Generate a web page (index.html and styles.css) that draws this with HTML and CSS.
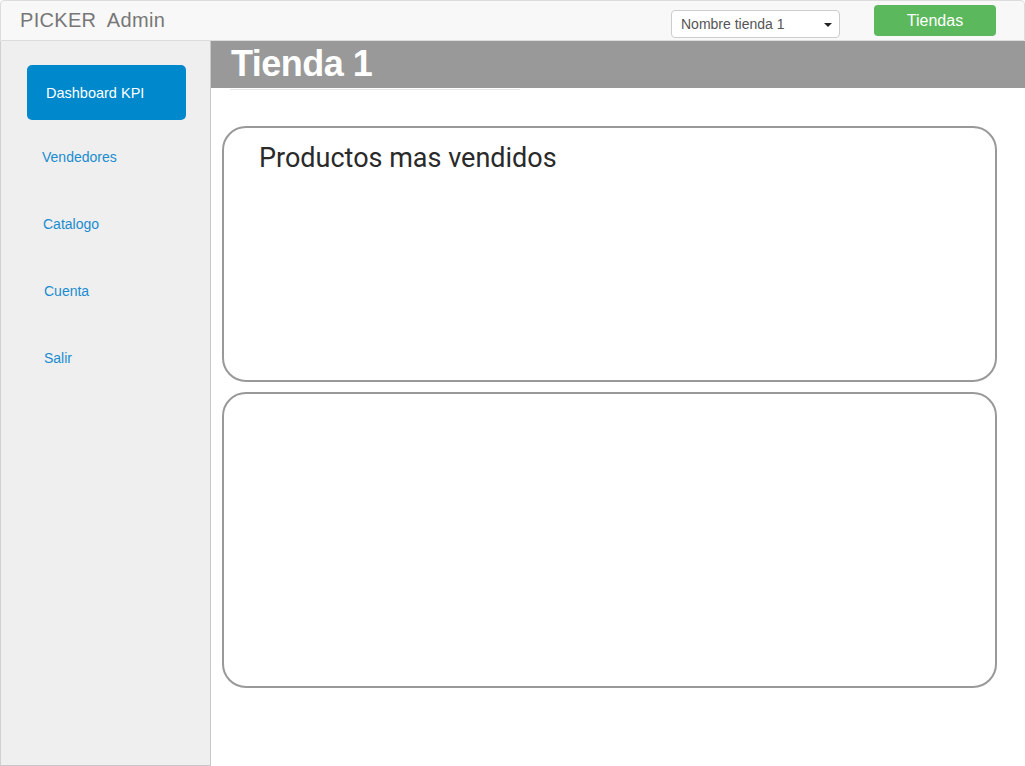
FILE: index.html
```html
<!DOCTYPE html>
<html lang="es">
<head>
<meta charset="utf-8">
<title>PICKER Admin</title>
<link rel="stylesheet" href="styles.css">
</head>
<body>
<header class="navbar">
  <div class="brand">PICKER&nbsp; Admin</div>
  <div class="nav-right">
    <div class="select">
      <span>Nombre tienda 1</span>
      <span class="caret"></span>
    </div>
    <button class="btn-green">Tiendas</button>
  </div>
</header>
<div class="layout">
  <aside class="sidebar">
    <a class="nav-active">Dashboard KPI</a>
    <nav class="nav-links">
      <a class="l1">Vendedores</a>
      <a class="l2">Catalogo</a>
      <a class="l3">Cuenta</a>
      <a class="l3">Salir</a>
    </nav>
  </aside>
  <main class="main">
    <div class="title-band"><h1>Tienda 1</h1></div>
    <div class="title-rule"></div>
    <section class="card card-top">
      <h2>Productos mas vendidos</h2>
    </section>
    <section class="card card-bottom"></section>
  </main>
</div>
</body>
</html>
```

FILE: styles.css
```css
* { box-sizing: border-box; }
html, body { margin: 0; padding: 0; }
body {
  width: 1025px;
  height: 766px;
  overflow: hidden;
  background: #fff;
  font-family: "Liberation Sans", Arial, sans-serif;
}
.navbar {
  height: 41px;
  background: #f8f8f8;
  border: 1px solid #dcdcdc;
  border-radius: 4px 4px 0 0;
  display: flex;
  align-items: flex-start;
  justify-content: space-between;
}
.brand {
  font-size: 20px;
  letter-spacing: 0.3px;
  color: #777;
  padding: 8px 0 0 19px;
  line-height: 23px;
}
.nav-right {
  display: flex;
  align-items: flex-start;
}
.select {
  margin-top: 9px;
  width: 169px;
  height: 28px;
  border: 1px solid #ccc;
  border-radius: 4px;
  background: #fff;
  display: flex;
  align-items: center;
  justify-content: space-between;
  padding: 0 7px 0 9px;
  font-size: 14px;
  color: #555;
}
.caret {
  width: 0; height: 0;
  border-left: 4px solid transparent;
  border-right: 4px solid transparent;
  border-top: 4px solid #222;
  margin-top: 1px;
}
.btn-green {
  margin: 4px 28px 0 34px;
  width: 122px;
  height: 31px;
  border: 0;
  border-radius: 4px;
  background: #5cb85c;
  color: #fff;
  font-family: "Liberation Sans", Arial, sans-serif;
  font-size: 16px;
  padding: 0 0 0 0;
}
.layout {
  display: flex;
  height: 725px;
}
.sidebar {
  width: 211px;
  flex: none;
  background: #efefef;
  border-left: 1px solid #d0d0d0;
  border-right: 1px solid #c8c8c8;
  border-bottom: 1px solid #c8c8c8;
  padding-top: 24px;
  display: flex;
  flex-direction: column;
}
.nav-active {
  margin-left: 26px;
  width: 159px;
  height: 55px;
  border-radius: 5px;
  background: #0088cc;
  color: #fff;
  font-size: 14.5px;
  display: flex;
  align-items: center;
  padding-left: 19px;
  padding-top: 1px;
}
.nav-links {
  display: flex;
  flex-direction: column;
  gap: 47px;
  margin-top: 27px;
}
.nav-links a {
  color: #1a8ccf;
  font-size: 14px;
  line-height: 20px;
}
.l1 { margin-left: 41px; }
.l2 { margin-left: 42px; }
.l3 { margin-left: 43px; }
.main {
  flex: 1;
  display: flex;
  flex-direction: column;
}
.title-band {
  height: 47px;
  background: #999;
  padding-left: 20px;
}
.title-band h1 {
  margin: 0;
  color: #fff;
  font-size: 36px;
  letter-spacing: -0.5px;
  font-weight: bold;
  line-height: 46px;
}
.title-rule {
  margin: 1px 0 0 19px;
  width: 290px;
  border-top: 1px solid #e6e6e6;
}
.card {
  margin-left: 11px;
  width: 775px;
  border: 2px solid #999;
  border-radius: 24px;
}
.card-top {
  margin-top: 36px;
  height: 256px;
  padding: 14px 0 0 35px;
}
.card-top h2 {
  margin: 0;
  font-family: Roboto, "Liberation Sans", sans-serif;
  font-weight: normal;
  font-size: 27px;
  line-height: 32px;
  color: #2a2a2a;
}
.card-bottom {
  margin-top: 10px;
  height: 296px;
}
```
